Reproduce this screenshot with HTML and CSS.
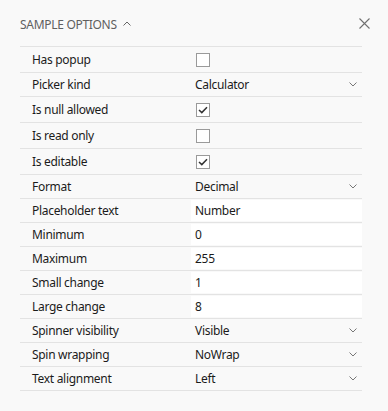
FILE: index.html
```html
<html>
<head>
    <title>Sample options</title>
    <link rel="stylesheet" href="styles.css">
</head>
<body>
    <div class="panel">
        <div class="panel-header">
            <div class="panel-title">
                SAMPLE OPTIONS
                <svg class="caret" width="8" height="5" viewBox="0 0 8 5"><path d="M0.5 4.5 L4 1 L7.5 4.5" fill="none" stroke="#666" stroke-width="1"/></svg>
            </div>
            <div class="close-btn">
                <svg width="11" height="11" viewBox="0 0 11 11"><path d="M0.5 0.5 L10.5 10.5 M10.5 0.5 L0.5 10.5" stroke="#707070" stroke-width="1.1"/></svg>
            </div>
        </div>

        <div class="options">
            <div class="row check-row">
                <div class="label">Has popup</div>
                <div class="value"><span class="checkbox"></span></div>
            </div>
            <div class="row">
                <div class="label">Picker kind</div>
                <div class="value select">Calculator <svg class="chevron" width="8" height="5" viewBox="0 0 8 5"><path d="M0.5 0.5 L4 4 L7.5 0.5" fill="none" stroke="#777" stroke-width="1"/></svg></div>
            </div>
            <div class="row check-row">
                <div class="label">Is null allowed</div>
                <div class="value"><span class="checkbox checked"><svg width="10" height="8" viewBox="0 0 10 8"><path d="M1 4 L3.8 6.6 L9 1.2" fill="none" stroke="#333" stroke-width="1.5"/></svg></span></div>
            </div>
            <div class="row check-row">
                <div class="label">Is read only</div>
                <div class="value"><span class="checkbox"></span></div>
            </div>
            <div class="row check-row">
                <div class="label">Is editable</div>
                <div class="value"><span class="checkbox checked"><svg width="10" height="8" viewBox="0 0 10 8"><path d="M1 4 L3.8 6.6 L9 1.2" fill="none" stroke="#333" stroke-width="1.5"/></svg></span></div>
            </div>
            <div class="row">
                <div class="label">Format</div>
                <div class="value select">Decimal <svg class="chevron" width="8" height="5" viewBox="0 0 8 5"><path d="M0.5 0.5 L4 4 L7.5 0.5" fill="none" stroke="#777" stroke-width="1"/></svg></div>
            </div>
            <div class="row">
                <div class="label">Placeholder text</div>
                <div class="value"><div class="text-input">Number</div></div>
            </div>
            <div class="row">
                <div class="label">Minimum</div>
                <div class="value"><div class="text-input">0</div></div>
            </div>
            <div class="row">
                <div class="label">Maximum</div>
                <div class="value"><div class="text-input">255</div></div>
            </div>
            <div class="row">
                <div class="label">Small change</div>
                <div class="value"><div class="text-input">1</div></div>
            </div>
            <div class="row">
                <div class="label">Large change</div>
                <div class="value"><div class="text-input">8</div></div>
            </div>
            <div class="row">
                <div class="label">Spinner visibility</div>
                <div class="value select">Visible <svg class="chevron" width="8" height="5" viewBox="0 0 8 5"><path d="M0.5 0.5 L4 4 L7.5 0.5" fill="none" stroke="#777" stroke-width="1"/></svg></div>
            </div>
            <div class="row">
                <div class="label">Spin wrapping</div>
                <div class="value select">NoWrap <svg class="chevron" width="8" height="5" viewBox="0 0 8 5"><path d="M0.5 0.5 L4 4 L7.5 0.5" fill="none" stroke="#777" stroke-width="1"/></svg></div>
            </div>
            <div class="row">
                <div class="label">Text alignment</div>
                <div class="value select">Left <svg class="chevron" width="8" height="5" viewBox="0 0 8 5"><path d="M0.5 0.5 L4 4 L7.5 0.5" fill="none" stroke="#777" stroke-width="1"/></svg></div>
            </div>
        </div>
    </div>
</body>
</html>
```
FILE: styles.css
```css
body {
    margin: 0;
    background-color: #f9f9f9;
    font-family: 'Noto Sans', sans-serif;
    font-size: 12px;
    letter-spacing: -0.3px; /* tighten to the narrower system font */
    color: #1b1b1b;
}

.panel {
    padding: 0 26px 0 20px;
}

.panel-header {
    height: 46px;
    display: flex;
    align-items: center;
    justify-content: space-between;
    margin-right: -12px; /* close button sits past the table edge */
}

.panel-title {
    display: flex;
    align-items: center;
    gap: 6px;
    color: #5f5f5f;
    font-size: 12px;
    padding-top: 2px;
}

.caret {
    margin-top: -2px;
}

.close-btn {
    width: 20px;
    height: 20px;
    display: flex;
    align-items: center;
    justify-content: center;
}

.options {
    border-top: 1px solid #e3e3e3;
}

.row {
    display: grid;
    grid-template-columns: 171px 1fr;
    height: 23px;
    border-bottom: 1px solid #e3e3e3;
}

.check-row {
    height: 25px;
}

.label {
    padding-left: 12px;
    display: flex;
    align-items: center;
}

.value {
    display: flex;
    align-items: center;
}

.select {
    padding-left: 4px;
    justify-content: space-between;
}

.chevron {
    margin-right: 5px;
}

.checkbox {
    width: 12px;
    height: 12px;
    margin-left: 5px;
    border: 1px solid #9a9a9a;
    background-color: #ffffff;
    display: flex;
    align-items: center;
    justify-content: center;
}

.text-input {
    flex: 1;
    height: 21px;
    background-color: #ffffff;
    padding-left: 4px;
    display: flex;
    align-items: center;
}
```
